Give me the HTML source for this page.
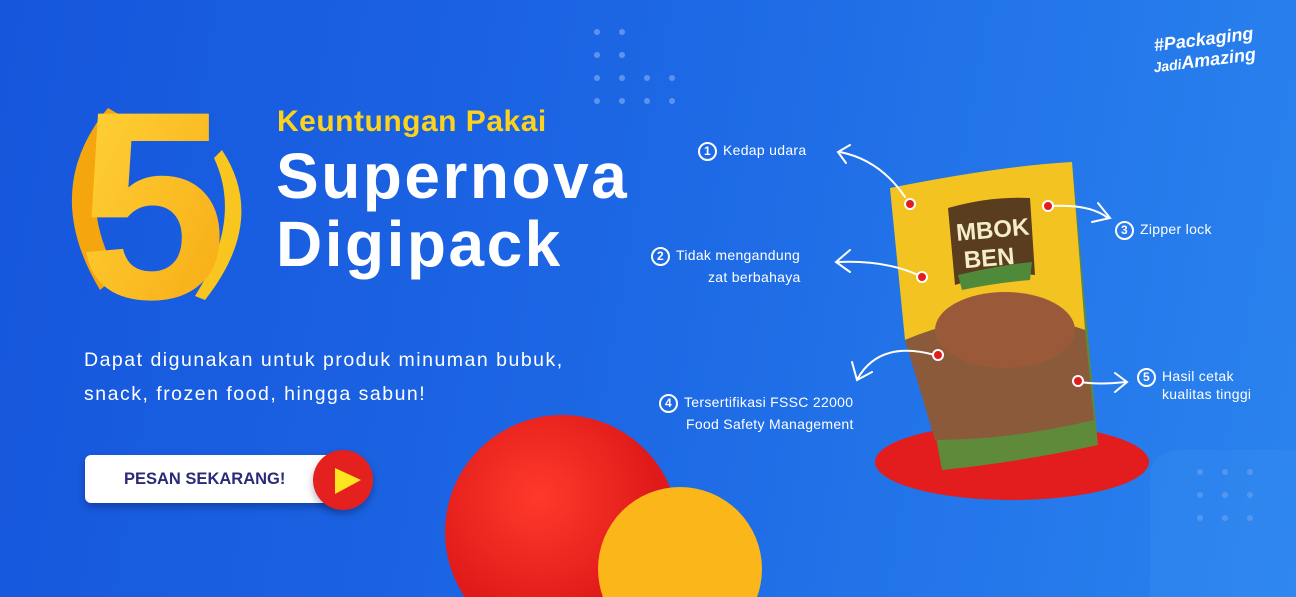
<!DOCTYPE html>
<html><head><meta charset="utf-8"><style>
*{margin:0;padding:0;box-sizing:border-box}
html,body{width:1296px;height:597px;overflow:hidden}
body{position:relative;font-family:"Liberation Sans",sans-serif;background:linear-gradient(100deg,#1656dc 0%,#1c66e4 45%,#2a83ee 100%);color:#fff}
.a{position:absolute}
svg{overflow:hidden}
.lbl{font-size:14px;color:#fff;line-height:22px;letter-spacing:.3px}
.n{display:inline-block;width:19px;height:19px;border:2px solid #fff;border-radius:50%;text-align:center;font-size:12px;line-height:15px;font-weight:bold;margin-right:6px;vertical-align:middle}
</style></head><body>
<svg class="a" style="left:0;top:0" width="1296" height="597">
<defs>
<linearGradient id="y" x1="0" y1="0" x2="1" y2="1"><stop offset="0" stop-color="#ffd63a"/><stop offset="1" stop-color="#f7a812"/></linearGradient>
<radialGradient id="r" cx=".4" cy=".35"><stop offset="0" stop-color="#ff3a2a"/><stop offset="1" stop-color="#e01a1a"/></radialGradient>
</defs>
<g fill="#7aa6f0" opacity=".7">
<circle cx="597" cy="32" r="3"/><circle cx="622" cy="32" r="3"/><circle cx="597" cy="55" r="3"/><circle cx="622" cy="55" r="3"/>
<circle cx="597" cy="78" r="3"/><circle cx="622" cy="78" r="3"/><circle cx="647" cy="78" r="3"/><circle cx="672" cy="78" r="3"/>
<circle cx="597" cy="101" r="3"/><circle cx="622" cy="101" r="3"/><circle cx="647" cy="101" r="3"/><circle cx="672" cy="101" r="3"/>
<circle cx="1200" cy="472" r="3"/><circle cx="1225" cy="472" r="3"/><circle cx="1250" cy="472" r="3"/>
<circle cx="1200" cy="495" r="3"/><circle cx="1225" cy="495" r="3"/><circle cx="1250" cy="495" r="3"/>
<circle cx="1200" cy="518" r="3"/><circle cx="1225" cy="518" r="3"/><circle cx="1250" cy="518" r="3"/>
</g>
<path d="M1150 597 L1150 480 Q1150 450 1180 450 L1296 450 L1296 597Z" fill="#3a8ff2" opacity=".35"/>
<path d="M108 108 Q40 190 100 290 L118 275 Q72 195 120 115Z" fill="#f5a50e"/>
<path d="M222 150 Q268 220 205 300 L195 296 Q243 220 214 158Z" fill="#f9c51f"/>
<text x="78" y="298" font-size="268" fill="url(#y)" style="font-family:'Liberation Sans',sans-serif;font-weight:bold">5</text>
<circle cx="562" cy="532" r="117" fill="url(#r)"/>
<circle cx="680" cy="569" r="82" fill="#fbb61a"/>
<ellipse cx="1012" cy="462" rx="137" ry="38" fill="#e31d1d"/>
<path d="M890 188 Q1000 166 1072 162 L1098 445 Q1020 462 942 470Z" fill="#5f8a3a"/>
<path d="M890 188 Q1000 166 1072 162 L1085 330 Q1000 300 905 340Z" fill="#f3c421"/>
<path d="M905 340 Q1000 300 1085 330 L1094 420 Q1010 440 935 440Z" fill="#8b5a3a"/>
<ellipse cx="1005" cy="330" rx="70" ry="38" fill="#9a5a3a"/>
<path d="M948 208 Q990 196 1030 198 L1035 275 Q1000 270 955 285Z" fill="#5a3c1e"/>
<text x="956" y="238" font-size="24" font-weight="bold" fill="#f5edc8" transform="rotate(-5 990 230)">MBOK</text>
<text x="964" y="266" font-size="24" font-weight="bold" fill="#f5edc8" transform="rotate(-5 990 260)">BEN</text>
<path d="M958 275 Q1000 265 1032 262 L1030 280 Q995 283 962 290Z" fill="#4e8a3a"/>
<g stroke="#fff" stroke-width="2" fill="none" stroke-linecap="round">
<path d="M905 197 Q880 160 840 152 M850 145 L838 152 L846 163"/>
<path d="M1052 206 Q1090 204 1108 218 M1098 203 L1110 218 L1092 222"/>
<path d="M918 275 Q885 260 838 262 M850 250 L836 262 L850 272"/>
<path d="M935 355 Q880 340 858 378 M852 362 L857 380 L872 372"/>
<path d="M1080 382 Q1100 385 1125 382 M1115 373 L1127 382 L1115 392"/>
</g>
<g fill="#e31d1d" stroke="#fff" stroke-width="2">
<circle cx="910" cy="204" r="5"/><circle cx="1048" cy="206" r="5"/><circle cx="922" cy="277" r="5"/><circle cx="938" cy="355" r="5"/><circle cx="1078" cy="381" r="5"/>
</g>
</svg>
<div class="a" style="left:277px;top:105px;font-size:30px;font-weight:bold;color:#fcd21f;letter-spacing:.5px">Keuntungan Pakai</div>
<div class="a" style="left:276px;top:142px;font-size:64px;font-weight:bold;line-height:68px;letter-spacing:2.5px">Supernova<br>Digipack</div>
<div class="a" style="left:84px;top:343px;font-size:19.5px;line-height:34px;letter-spacing:1.5px">Dapat digunakan untuk produk minuman bubuk,<br>snack, frozen food, hingga sabun!</div>
<div class="a" style="left:85px;top:455px;width:258px;height:48px;background:#fff;border-radius:6px;box-shadow:0 4px 8px rgba(0,0,40,.3);color:#2a2a78;font-weight:bold;font-size:16.5px;line-height:48px;padding-left:39px">PESAN SEKARANG!</div>
<div class="a" style="left:313px;top:450px;width:60px;height:60px;border-radius:50%;background:#e4211e;box-shadow:0 4px 8px rgba(0,0,40,.3)"></div>
<svg class="a" style="left:333px;top:466px" width="30" height="30"><path d="M2 2 L28 14 L2 28Z" fill="#fbe51e"/></svg>
<div class="a" style="left:1140px;top:30px;font-size:18px;font-weight:bold;font-style:italic;transform:rotate(-7deg);line-height:21px;text-align:right;width:115px">#Packaging<br><span style="font-size:14px">Jadi</span>Amazing</div>
<div class="a lbl" style="left:698px;top:139px"><span class="n">1</span>Kedap udara</div>
<div class="a lbl" style="left:651px;top:244px"><span class="n">2</span>Tidak mengandung</div>
<div class="a lbl" style="left:708px;top:266px">zat berbahaya</div>
<div class="a lbl" style="left:1115px;top:218px"><span class="n">3</span>Zipper lock</div>
<div class="a lbl" style="left:659px;top:391px"><span class="n">4</span>Tersertifikasi FSSC 22000</div>
<div class="a lbl" style="left:686px;top:413px">Food Safety Management</div>
<div class="a lbl" style="left:1137px;top:365px"><span class="n">5</span>Hasil cetak</div>
<div class="a lbl" style="left:1162px;top:383px">kualitas tinggi</div>
</body></html>
